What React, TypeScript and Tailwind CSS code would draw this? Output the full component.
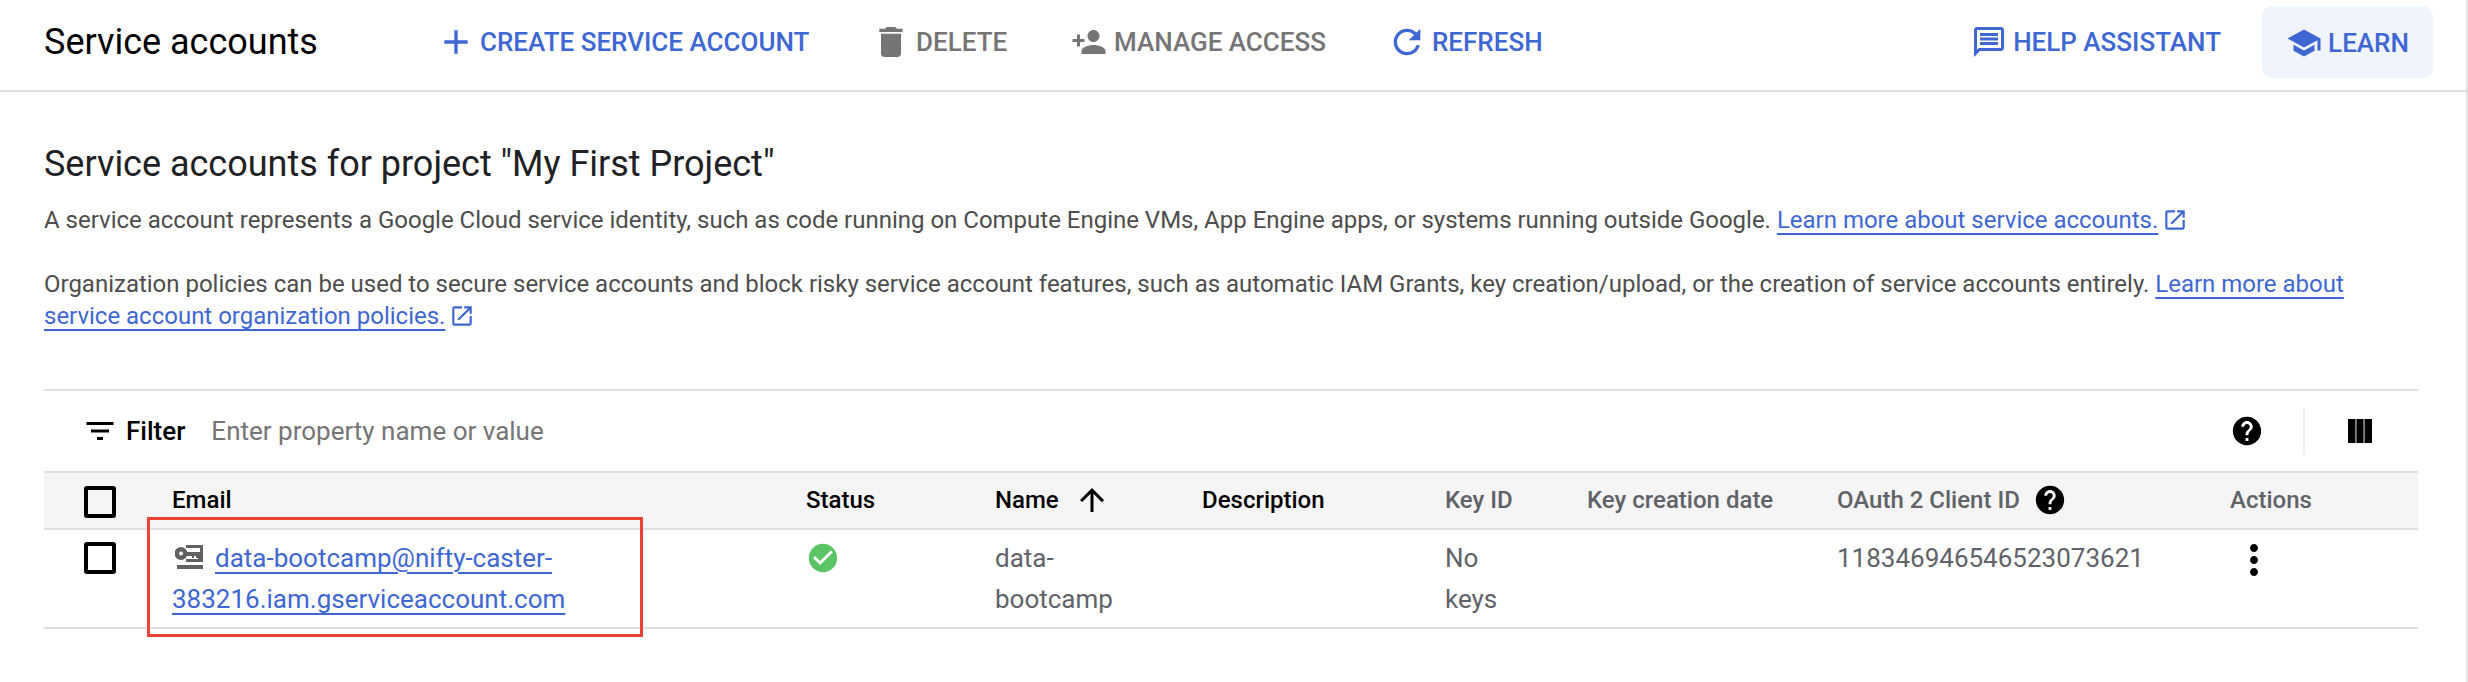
const PLUS = "M19 13h-6v6h-2v-6H5v-2h6V5h2v6h6v2z";

function Icon({ d, className }: { d: string; className: string }) {
  return (
    <svg viewBox="0 0 24 24" fill="currentColor" className={className}>
      <path d={d} />
    </svg>
  );
}

function ToolbarButton({ d, label, className, iconSize, gap }: { d: string; label: string; className: string; iconSize: string; gap: string }) {
  return (
    <div className={`flex items-center font-medium text-[26px] ${gap} ${className}`}>
      <Icon d={d} className={`shrink-0 ${iconSize}`} />
      <span>{label}</span>
    </div>
  );
}

function Checkbox() {
  return <div className="w-[32px] h-[32px] border-[4px] border-black rounded-[3px]" />;
}

function ExternalLink() {
  return (
    <svg viewBox="0 0 24 24" fill="currentColor" className="inline-block w-[26px] h-[26px] ml-[4px] text-[#3f67d4] align-[-5px]">
      <path d="M19 19H5V5h7V3H5a2 2 0 0 0-2 2v14a2 2 0 0 0 2 2h14c1.1 0 2-.9 2-2v-7h-2v7zM14 3v2h3.59l-9.83 9.83 1.41 1.41L19 6.41V10h2V3h-7z" />
    </svg>
  );
}

function TextLink({ children }: { children: React.ReactNode }) {
  return <span className="text-[#3f67d4] underline decoration-[2px] underline-offset-[5px]">{children}</span>;
}

const HELP = "M12 2C6.48 2 2 6.48 2 12s4.48 10 10 10 10-4.48 10-10S17.52 2 12 2zm1 17h-2v-2h2v2zm2.07-7.75-.9.92C13.45 12.9 13 13.5 13 15h-2v-.5c0-1.1.45-2.1 1.17-2.83l1.24-1.26c.37-.36.59-.86.59-1.41 0-1.1-.9-2-2-2s-2 .9-2 2H8c0-2.21 1.79-4 4-4s4 1.79 4 4c0 .88-.36 1.68-.93 2.25z";

const COLUMNS = "grid grid-cols-[128px_634px_189px_207px_243px_142px_250px_393px_1fr]";

export default function App() {
  return (
    <div className="relative w-[2468px] h-[682px] bg-white overflow-hidden font-['Roboto',sans-serif] border-r-[2px] border-[#e0e0e0]">
      <div className="h-[92px] border-b-[2px] border-[#e0e0e0] flex items-center pl-[44px] pr-[33px] pb-[6px]">
        <h1 className="text-[36px] text-black w-[392px] leading-none">Service accounts</h1>
        <ToolbarButton d={PLUS} label="CREATE SERVICE ACCOUNT" className="text-[#3f67d4] w-[435px]" iconSize="w-[40px] h-[40px]" gap="gap-[4px]" />
        <ToolbarButton d="M6 19c0 1.1.9 2 2 2h8c1.1 0 2-.9 2-2V7H6v12zM19 4h-3.5l-1-1h-5l-1 1H5v2h14V4z" label="DELETE" className="text-[#757575] w-[200px]" iconSize="w-[40px] h-[40px]" gap="gap-[5px]" />
        <ToolbarButton d="M15 12c2.21 0 4-1.79 4-4s-1.79-4-4-4-4 1.79-4 4 1.79 4 4 4zm-9-2V7H4v3H1v2h3v3h2v-3h3v-2H6zm9 4c-2.67 0-8 1.34-8 4v2h16v-2c0-2.66-5.33-4-8-4z" label="MANAGE ACCESS" className="text-[#757575] w-[316px]" iconSize="w-[36px] h-[36px]" gap="gap-[7px]" />
        <ToolbarButton d="M17.65 6.35A7.958 7.958 0 0 0 12 4c-4.42 0-7.99 3.58-7.99 8s3.57 8 7.99 8c3.73 0 6.84-2.55 7.73-6h-2.08A5.99 5.99 0 0 1 12 18c-3.31 0-6-2.69-6-6s2.69-6 6-6c1.66 0 3.14.69 4.22 1.78L13 11h7V4l-2.35 2.35z" label="REFRESH" className="text-[#3f67d4]" iconSize="w-[40px] h-[40px]" gap="gap-[5px]" />
        <div className="ml-auto flex items-center">
          <ToolbarButton d="M20 2H4c-1.1 0-2 .9-2 2v18l4-4h14c1.1 0 2-.9 2-2V4c0-1.1-.9-2-2-2zm0 14H5.17L4 17.17V4h16v12zM6 12h12v2H6zm0-3h12v2H6zm0-3h12v2H6z" label="HELP ASSISTANT" className="text-[#3f67d4]" iconSize="w-[36px] h-[36px]" gap="gap-[6px]" />
          <div className="ml-[41px] w-[171px] h-[72px] rounded-[10px] bg-[#f0f4fd] flex items-center justify-center pt-[2px]">
            <ToolbarButton d="M5 13.18v4L12 21l7-3.82v-4L12 17l-7-3.82zM12 3 1 9l11 6 9-4.91V17h2V9L12 3z" label="LEARN" className="text-[#3f67d4]" iconSize="w-[36px] h-[36px]" gap="gap-[6px]" />
          </div>
        </div>
      </div>

      <div className="px-[44px] pt-[48px] text-[24px] leading-[32px] tracking-[-0.01px] text-[#4d4d4d] w-[2418px]">
        <h2 className="text-[36px] leading-[48px] text-[#202124] mb-[16px]">Service accounts for project "My First Project"</h2>
        <p>
          A service account represents a Google Cloud service identity, such as code running on Compute Engine VMs, App Engine apps, or systems running outside Google.{" "}
          <TextLink>Learn more about service accounts.</TextLink>
          <ExternalLink />
        </p>
        <p className="mt-[32px]">
          Organization policies can be used to secure service accounts and block risky service account features, such as automatic IAM Grants, key creation/upload, or the creation of service accounts entirely.{" "}
          <TextLink>Learn more about service account organization policies.</TextLink>
          <ExternalLink />
        </p>
      </div>

      <div className="mt-[57px] ml-[44px] w-[2374px] border-t-[2px] border-[#e0e0e0]">
        <div className="h-[80px] flex items-center pl-[38px] pr-[38px] text-[26px]">
          <Icon d="M10 18h4v-2h-4v2zM3 6v2h18V6H3zm3 7h12v-2H6v2z" className="w-[36px] h-[36px] text-black" />
          <span className="ml-[8px] font-medium text-black">Filter</span>
          <span className="ml-[26px] text-[#757575]">Enter property name or value</span>
          <Icon d={HELP} className="ml-auto w-[34px] h-[34px] text-black" />
          <div className="ml-[39px] w-[2px] h-[47px] bg-[#eeeeee]" />
          <Icon d="M4 4h5v16H4zM9.600 4h4.800v16H9.600zM15 4h5v16h-5z" className="ml-[37px] w-[36px] h-[36px] mr-[2px] text-black" />
        </div>

        <div className={`${COLUMNS} items-center h-[59px] pb-[2px] bg-[#f5f5f5] border-y-[2px] border-[#e0e0e0] text-[24px] font-medium text-black`}>
          <div className="pl-[40px] pt-[4px]"><Checkbox /></div>
          <div>Email</div>
          <div>Status</div>
          <div className="flex items-center gap-[15px]">
            Name
            <Icon d="M4 12l1.41 1.41L11 7.83V20h2V7.83l5.58 5.59L20 12l-8-8-8 8z" className="w-[36px] h-[36px] text-black" />
          </div>
          <div>Description</div>
          <div className="text-[#5f6368]">Key ID</div>
          <div className="text-[#5f6368]">Key creation date</div>
          <div className="flex items-center gap-[13px] text-[#5f6368]">
            OAuth 2 Client ID
            <Icon d={HELP} className="w-[34px] h-[34px] text-black" />
          </div>
          <div className="text-[#5f6368]">Actions</div>
        </div>

        <div className={`${COLUMNS} h-[99px] border-b-[2px] border-[#e0e0e0] text-[26px] leading-[41px] text-[#5f6368] pt-[8px]`}>
          <div className="pl-[40px] pt-[4px]"><Checkbox /></div>
          <div className="w-[440px]">
            <svg viewBox="0 0 28 24" fill="currentColor" className="inline-block w-[28px] h-[24px] mr-[12px] ml-[3px] text-[#616161] align-[-2px]">
              <path d="M2 20h26v4H2zM11 0h17v17H11v-3h12v-1h-2v-2h-2v2h-2v-2h-6V7h14V3H11zM6 2a6.500 6.500 0 1 1 0 13A6.500 6.500 0 0 1 6 2zm0 4.500a2 2 0 1 0 0 4 2 2 0 0 0 0-4z" />
            </svg>
            <TextLink>data-bootcamp@nifty-caster-383216.iam.gserviceaccount.com</TextLink>
          </div>
          <div>
            <Icon d="M12 2C6.48 2 2 6.48 2 12s4.48 10 10 10 10-4.48 10-10S17.52 2 12 2zm-2 15-5-5 1.41-1.41L10 14.17l7.59-7.59L19 8l-9 9z" className="w-[34px] h-[34px] text-[#5bc466] mt-[3px]" />
          </div>
          <div className="w-[120px]">data-bootcamp</div>
          <div />
          <div className="w-[60px]">No keys</div>
          <div />
          <div>118346946546523073621</div>
          <div className="-mt-[2px]">
            <Icon d="M12 8c1.1 0 2-.9 2-2s-.9-2-2-2-2 .9-2 2 .9 2 2 2zm0 2c-1.1 0-2 .9-2 2s.9 2 2 2 2-.9 2-2-.9-2-2-2zm0 6c-1.1 0-2 .9-2 2s.9 2 2 2 2-.9 2-2-.9-2-2-2z" className="w-[48px] h-[48px] text-black" />
          </div>
        </div>
      </div>

      <div className="absolute left-[147px] top-[517px] w-[496px] h-[120px] border-[3px] border-[#ea4335]" />
    </div>
  );
}
